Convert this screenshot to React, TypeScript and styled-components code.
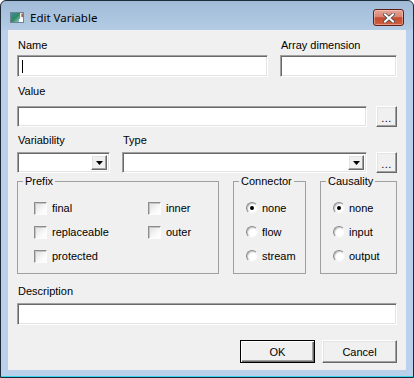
import React from 'react';
import styled, { createGlobalStyle } from 'styled-components';

const GlobalStyle = createGlobalStyle`
  html, body { margin: 0; padding: 0; background: #fff; }
  body {
    font-family: "Liberation Sans", Arial, sans-serif;
    font-size: 11px;
    color: #000;
  }
`;

const Window = styled.div`
  width: 414px;
  height: 378px;
  box-sizing: border-box;
  border: 1px solid #1d2a37;
  border-radius: 6px 6px 0 0;
  background: linear-gradient(#a1bbd7 0px, #b3cbe5 28px, #b9d1ea 30px);
  box-shadow: inset 0 -1px 0 #39d3ea;
  display: flex;
  flex-direction: column;
  overflow: hidden;
`;

const TitleBar = styled.div`
  height: 29px;
  box-sizing: border-box;
  padding: 4px 9px 0 9px;
  display: flex;
  align-items: center;
  gap: 6px;
  flex: none;
`;

const Title = styled.span`
  font-family: "Segoe UI", "Noto Sans", sans-serif;
  font-size: 11.5px;
  color: #000;
`;

const CloseButton = styled.div`
  margin-left: auto;
  width: 31px;
  height: 17px;
  box-sizing: border-box;
  border: 1px solid #5e1f17;
  border-radius: 3px;
  background: linear-gradient(#e6a597 0%, #d98575 45%, #c24a32 52%, #d0603f 100%);
  box-shadow: inset 0 0 0 1px rgba(255, 220, 210, 0.45);
  display: flex;
  align-items: center;
  justify-content: center;
`;

const ClientWrap = styled.div`
  flex: 1;
  display: flex;
  padding: 0 7px 7px 7px;
`;

const Client = styled.div`
  flex: 1;
  background: #f0f0f0;
  padding: 9px 9px 0 9px;
  display: flex;
  flex-direction: column;
`;

const Row = styled.div<{ $top?: number; $gap?: number }>`
  display: flex;
  align-items: flex-end;
  gap: ${p => p.$gap ?? 12}px;
  margin-top: ${p => p.$top ?? 0}px;
`;

const Field = styled.div<{ $w?: number }>`
  display: flex;
  flex-direction: column;
  ${p => (p.$w ? `width: ${p.$w}px; flex: none;` : 'flex: 1;')}
`;

const Label = styled.div<{ $gap: number }>`
  line-height: 13px;
  padding-left: 1px;
  margin-bottom: ${p => p.$gap}px;
  white-space: nowrap;
`;

const sunken = `
  box-sizing: border-box;
  background: #fff;
  border: 1px solid;
  border-color: #a0a0a0 #ffffff #ffffff #a0a0a0;
  box-shadow: inset 1px 1px 0 #696969, inset -1px -1px 0 #e3e3e3;
`;

const Edit = styled.div<{ $h?: number }>`
  ${sunken}
  height: ${p => p.$h ?? 22}px;
  display: flex;
  align-items: center;
  padding-left: 4px;
`;

const Caret = styled.span`
  width: 1px;
  height: 13px;
  background: #000;
`;

const Combo = styled.div`
  ${sunken}
  height: 21px;
  padding: 2px;
  display: flex;
  justify-content: flex-end;
`;

const raised = `
  box-sizing: border-box;
  background: #f0f0f0;
  border: 1px solid;
  border-color: #ffffff #696969 #696969 #ffffff;
  box-shadow: inset -1px -1px 0 #a0a0a0, inset 1px 1px 0 #e3e3e3;
`;

const DropButton = styled.div`
  ${raised}
  width: 16px;
  display: flex;
  align-items: center;
  justify-content: center;
`;

const MoreButton = styled.div<{ $h?: number }>`
  ${raised}
  width: 21px;
  height: ${p => p.$h ?? 21}px;
  flex: none;
  display: flex;
  align-items: center;
  justify-content: center;
  line-height: 1;
  padding-top: 4px;
  letter-spacing: 0.5px;
`;

const Groups = styled.div`
  display: flex;
  gap: 14px;
  margin-top: 2px;
`;

const Group = styled.fieldset<{ $w: number }>`
  width: ${p => p.$w}px;
  height: 99px;
  box-sizing: border-box;
  margin: 0;
  padding: 0;
  min-width: 0;
  border: 1px solid #a0a0a0;
  flex: none;
`;

const Legend = styled.legend`
  margin-left: 5px;
  padding: 0 2px;
  line-height: 13px;
`;

const Options = styled.div<{ $cols: string; $left: number }>`
  display: grid;
  grid-template-columns: ${p => p.$cols};
  grid-auto-rows: 24px;
  padding: 8px 0 0 ${p => p.$left}px;
`;

const Option = styled.label<{ $gap: number }>`
  display: flex;
  align-items: center;
  gap: ${p => p.$gap}px;
  white-space: nowrap;
`;

const CheckBox = styled.span`
  width: 13px;
  height: 13px;
  box-sizing: border-box;
  border: 1px solid;
  border-color: #8c8c8c #fcfcfc #fcfcfc #8c8c8c;
  box-shadow: inset 1px 1px 0 #c4c4c4;
  background: linear-gradient(135deg, #dedede 0%, #f7f7f7 60%, #ffffff 100%);
  flex: none;
`;

const Radio = styled.span<{ $on?: boolean }>`
  width: 12px;
  height: 12px;
  box-sizing: border-box;
  border-radius: 50%;
  border: 1px solid;
  border-color: #8a8a8a #f4f4f4 #f4f4f4 #8a8a8a;
  box-shadow: inset 1px 1px 0 #c8c8c8;
  background: radial-gradient(circle at 62% 62%, #ffffff 35%, #e2e2e2 100%);
  display: flex;
  align-items: center;
  justify-content: center;
  flex: none;
  &::after {
    content: '';
    width: 4px;
    height: 4px;
    border-radius: 50%;
    background: ${p => (p.$on ? '#000' : 'transparent')};
  }
`;

const Footer = styled.div`
  display: flex;
  justify-content: flex-end;
  gap: 7px;
  margin-top: 15px;
`;

const PushButton = styled.div<{ $default?: boolean }>`
  width: 75px;
  height: 23px;
  box-sizing: border-box;
  background: #f0f0f0;
  display: flex;
  align-items: center;
  justify-content: center;
  border: 1px solid;
  ${p =>
    p.$default
      ? `border-color: #000;
         box-shadow: inset 1px 1px 0 #fff, inset -1px -1px 0 #696969, inset -2px -2px 0 #a0a0a0;`
      : `border-color: #fff #696969 #696969 #fff;
         box-shadow: inset -1px -1px 0 #a0a0a0, inset 1px 1px 0 #e3e3e3;`}
`;

const AppIcon = () => (
  <svg width="14" height="11" viewBox="0 0 14 11">
    <defs>
      <linearGradient id="ic" x1="0" y1="0" x2="1" y2="1">
        <stop offset="0" stopColor="#3f8fa8" />
        <stop offset="0.5" stopColor="#2c8a5c" />
        <stop offset="1" stopColor="#9fcbd6" />
      </linearGradient>
    </defs>
    <rect x="0.5" y="0.5" width="13" height="10" fill="#eef2f5" stroke="#6f8396" />
    <rect x="1" y="1" width="9" height="9" fill="url(#ic)" />
    <rect x="9" y="7" width="4" height="3" fill="#fff" />
    <rect x="11.5" y="1.5" width="1.2" height="3.5" fill="#8a2a1a" />
  </svg>
);

const CloseGlyph = () => (
  <svg width="12" height="10" viewBox="0 0 12 10">
    <path d="M2 1.5 L10 8.5 M10 1.5 L2 8.5" stroke="#4a4a4a" strokeWidth="3.6" strokeLinecap="square" />
    <path d="M2 1.5 L10 8.5 M10 1.5 L2 8.5" stroke="#fff" strokeWidth="2" strokeLinecap="square" />
  </svg>
);

const DownArrow = () => (
  <svg width="7" height="4" viewBox="0 0 7 4">
    <polygon points="0,0 7,0 3.5,4" fill="#000" />
  </svg>
);

const ComboBox = () => (
  <Combo>
    <DropButton>
      <DownArrow />
    </DropButton>
  </Combo>
);

const prefixes = ['final', 'inner', 'replaceable', 'outer', 'protected'];

export default function App() {
  return (
    <>
      <GlobalStyle />
      <Window>
        <TitleBar>
          <AppIcon />
          <Title>Edit Variable</Title>
          <CloseButton>
            <CloseGlyph />
          </CloseButton>
        </TitleBar>
        <ClientWrap>
          <Client>
            <Row>
              <Field $w={251}>
                <Label $gap={3}>Name</Label>
                <Edit>
                  <Caret />
                </Edit>
              </Field>
              <Field>
                <Label $gap={3}>Array dimension</Label>
                <Edit />
              </Field>
            </Row>

            <Row $top={8} $gap={9}>
              <Field>
                <Label $gap={8}>Value</Label>
                <Edit $h={21} />
              </Field>
              <MoreButton>...</MoreButton>
            </Row>

            <Row $top={7} $gap={9}>
              <Row $gap={12} style={{ flex: 1 }}>
                <Field $w={93}>
                  <Label $gap={5}>Variability</Label>
                  <ComboBox />
                </Field>
                <Field>
                  <Label $gap={5}>Type</Label>
                  <ComboBox />
                </Field>
              </Row>
              <MoreButton>...</MoreButton>
            </Row>

            <Groups>
              <Group $w={202}>
                <Legend>Prefix</Legend>
                <Options $cols="114px auto" $left={16}>
                  {prefixes.map(p => (
                    <Option key={p} $gap={5}>
                      <CheckBox />
                      {p}
                    </Option>
                  ))}
                </Options>
              </Group>
              <Group $w={73}>
                <Legend>Connector</Legend>
                <Options $cols="auto" $left={12}>
                  <Option $gap={4}><Radio $on />none</Option>
                  <Option $gap={4}><Radio />flow</Option>
                  <Option $gap={4}><Radio />stream</Option>
                </Options>
              </Group>
              <Group $w={77}>
                <Legend>Causality</Legend>
                <Options $cols="auto" $left={12}>
                  <Option $gap={4}><Radio $on />none</Option>
                  <Option $gap={4}><Radio />input</Option>
                  <Option $gap={4}><Radio />output</Option>
                </Options>
              </Group>
            </Groups>

            <Row $top={11}>
              <Field>
                <Label $gap={5}>Description</Label>
                <Edit />
              </Field>
            </Row>

            <Footer>
              <PushButton $default>OK</PushButton>
              <PushButton>Cancel</PushButton>
            </Footer>
          </Client>
        </ClientWrap>
      </Window>
    </>
  );
}
